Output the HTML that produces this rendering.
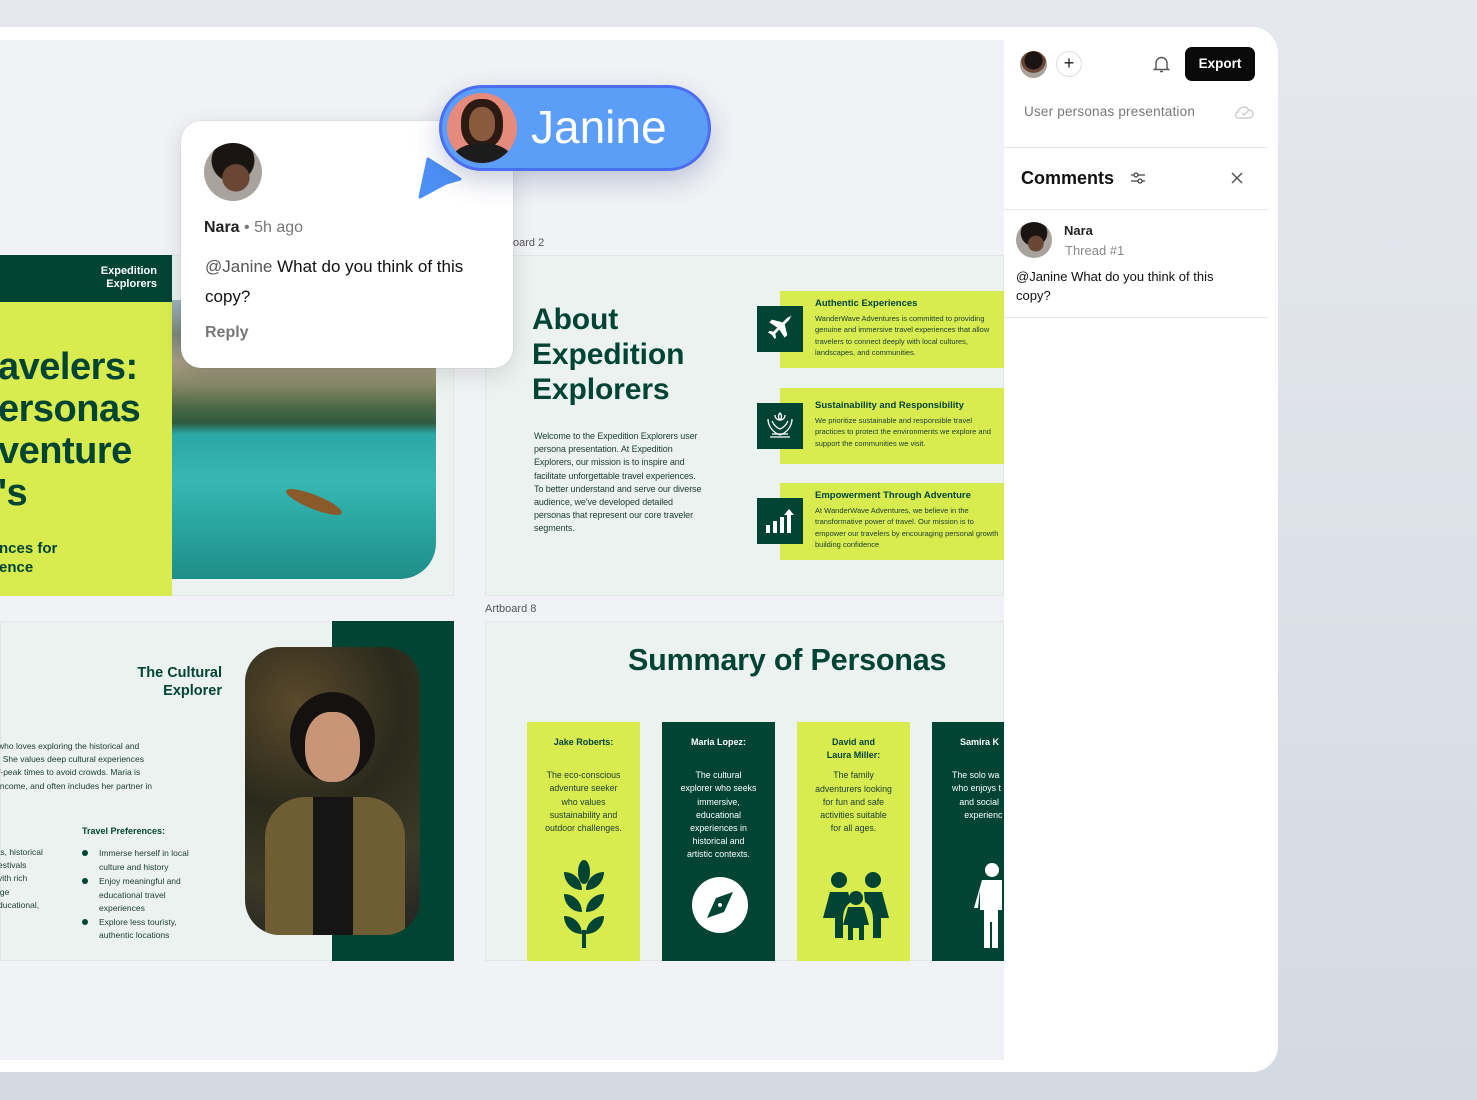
<!DOCTYPE html>
<html><head><meta charset="utf-8"><style>
*{margin:0;padding:0;box-sizing:border-box}
body{width:1477px;height:1100px;overflow:hidden;background:linear-gradient(#e5e8ee,#d4d9e2);font-family:"Liberation Sans",sans-serif;position:relative}
.a{position:absolute}
.g{color:#024433}
.lime{background:#d9ec4f}
.dg{background:#024433}
.b{font-weight:700}
</style></head><body>
<div class="a" style="left:-30px;top:27px;width:1308px;height:1045px;background:#fff;border-radius:0 26px 26px 0"></div>
<div class="a" style="left:0;top:40px;width:1004px;height:1020px;background:#f0f2f5;overflow:hidden">
 <!-- slide 1 -->
 <div class="a" style="left:0;top:215px;width:454px;height:341px;background:#ebf2f0;border:1px solid #e2e7e6"></div>
 <div class="a dg" style="left:0;top:215px;width:172px;height:47px"></div>
 <div class="a b" style="left:0;top:225px;width:157px;text-align:right;color:#fff;font-size:11px;line-height:13px">Expedition<br>Explorers</div>
 <div class="a lime" style="left:0;top:262px;width:172px;height:294px"></div>
 <div class="a b g" style="left:-2px;top:306px;font-size:38px;line-height:42px;letter-spacing:-0.5px;white-space:nowrap">avelers:<br>ersonas<br>venture<br>'s</div>
 <div class="a b g" style="left:-1px;top:499px;font-size:15px;line-height:19px">nces for<br>ence</div>
 <div class="a" style="left:172px;top:260px;width:264px;height:279px;border-radius:0 0 36px 0;overflow:hidden;background:linear-gradient(180deg,#9db4bd 0%,#7b8a7c 12%,#a79d86 22%,#8a8a6a 30%,#4e6a48 38%,#2f5a3e 44%,#2ba7a4 48%,#37b7b3 65%,#2aa6a0 80%,#1f8e8a 100%)">
  <div class="a" style="left:112px;top:195px;width:60px;height:14px;background:#8a5a2a;border-radius:50%;transform:rotate(22deg)"></div>
 </div>
 <!-- artboard 2 -->
 <div class="a" style="left:513px;top:197px;font-size:11px;color:#555">oard 2</div>
 <div class="a" style="left:485px;top:215px;width:519px;height:341px;background:#ebf2f0;border:1px solid #e2e7e6"></div>
 <div class="a b g" style="left:532px;top:262px;font-size:30px;line-height:35px;letter-spacing:-0.1px">About<br>Expedition<br>Explorers</div>
 <div class="a" style="left:534px;top:390px;width:172px;font-size:9px;line-height:13.2px;color:#1c3b30;letter-spacing:-0.1px">Welcome to the Expedition Explorers user persona presentation. At Expedition Explorers, our mission is to inspire and facilitate unforgettable travel experiences. To better understand and serve our diverse audience, we've developed detailed personas that represent our core traveler segments.</div>
 <div class="a lime" style="left:780px;top:251px;width:224px;height:77px"></div>
 <div class="a lime" style="left:780px;top:348px;width:224px;height:76px"></div>
 <div class="a lime" style="left:780px;top:443px;width:224px;height:77px"></div>
 <div class="a dg" style="left:757px;top:266px;width:46px;height:46px"></div>
 <div class="a dg" style="left:757px;top:363px;width:46px;height:46px"></div>
 <div class="a dg" style="left:757px;top:458px;width:46px;height:46px"></div>
 <svg class="a" style="left:764px;top:273px" width="32" height="32" viewBox="0 0 24 24"><path fill="#fff" d="M21 3c-1-1-3 0-4 1l-3 3-8-2-2 2 6 4-3 3-3-.5-1 1 3 2 2 3 1-1-.5-3 3-3 4 6 2-2-2-8 3-3c1-1 2-3 1-4z"/></svg>
 <svg class="a" style="left:763px;top:369px" width="34" height="34" viewBox="0 0 34 34" fill="none" stroke="#fff" stroke-width="1.3"><path d="M5 10c0 8 6 14 12 16 6-2 12-8 12-16"/><path d="M9 12c2 4 5 7 8 8 3-1 6-4 8-8"/><path d="M17 4c-2 2-2 5 0 7 2-2 2-5 0-7zM12 6c0 3 2 5 5 5M22 6c0 3-2 5-5 5"/><path d="M7 28h20M9 25h16"/></svg>
 <svg class="a" style="left:764px;top:465px" width="32" height="32" viewBox="0 0 32 32" fill="#fff"><rect x="2" y="20" width="4" height="8"/><rect x="9" y="16" width="4" height="12"/><rect x="16" y="12" width="4" height="16"/><path d="M23 28V10h-3l5-6 5 6h-3v18z"/></svg>
 <div class="a" style="left:815px;top:258px;width:189px;overflow:hidden;white-space:nowrap">
  <div class="b g" style="font-size:9.5px;margin-bottom:4px">Authentic Experiences</div>
  <div style="font-size:7.5px;line-height:11.3px;color:#1c3b30">WanderWave Adventures is committed to providing<br>genuine and immersive travel experiences that allow<br>travelers to connect deeply with local cultures,<br>landscapes, and communities.</div></div>
 <div class="a" style="left:815px;top:360px;width:189px;overflow:hidden;white-space:nowrap">
  <div class="b g" style="font-size:9.5px;margin-bottom:4px">Sustainability and Responsibility</div>
  <div style="font-size:7.5px;line-height:11.3px;color:#1c3b30">We prioritize sustainable and responsible travel<br>practices to protect the environments we explore and<br>support the communities we visit.</div></div>
 <div class="a" style="left:815px;top:450px;width:189px;overflow:hidden;white-space:nowrap">
  <div class="b g" style="font-size:9.5px;margin-bottom:4px">Empowerment Through Adventure</div>
  <div style="font-size:7.5px;line-height:11.3px;color:#1c3b30">At WanderWave Adventures, we believe in the<br>transformative power of travel. Our mission is to<br>empower our travelers by encouraging personal growth<br>building confidence</div></div>
 <!-- slide left bottom -->
 <div class="a" style="left:0;top:581px;width:454px;height:340px;background:#ebf2f0;border:1px solid #e2e7e6"></div>
 <div class="a dg" style="left:332px;top:581px;width:122px;height:340px"></div>
 <div class="a b g" style="left:100px;top:624px;width:122px;text-align:right;font-size:14.5px;line-height:18px">The Cultural<br>Explorer</div>
 <div class="a" style="left:-2px;top:700px;font-size:8.5px;line-height:13.2px;color:#1c3b30;white-space:nowrap">who loves exploring the historical and<br>. She values deep cultural experiences<br>f-peak times to avoid crowds. Maria is<br>income, and often includes her partner in</div>
 <div class="a" style="left:-2px;top:806px;font-size:8.5px;line-height:13.2px;color:#1c3b30;white-space:nowrap">ts, historical<br>estivals<br>vith rich<br>ige<br>ducational,</div>
 <div class="a b g" style="left:82px;top:786px;font-size:9px">Travel Preferences:</div>
 <div class="a" style="left:82px;top:807px;font-size:8.5px;line-height:13.5px;color:#1c3b30">
  <div style="position:relative;padding-left:17px">Immerse herself in local<br>culture and history<span class="a" style="left:0;top:3px;width:6px;height:6px;border-radius:50%;background:#024433"></span></div>
  <div style="position:relative;padding-left:17px;margin-top:1px">Enjoy meaningful and<br>educational travel<br>experiences<span class="a" style="left:0;top:3px;width:6px;height:6px;border-radius:50%;background:#024433"></span></div>
  <div style="position:relative;padding-left:17px">Explore less touristy,<br>authentic locations<span class="a" style="left:0;top:3px;width:6px;height:6px;border-radius:50%;background:#024433"></span></div>
 </div>
 <div class="a" style="left:245px;top:607px;width:175px;height:288px;border-radius:35px;overflow:hidden;background:radial-gradient(circle at 30% 20%,#5b4a2c,#2a2a1c 40%,#3a3a28 70%,#222 100%)">
  <div class="a" style="left:45px;top:45px;width:85px;height:90px;border-radius:50%;background:#141210"></div>
  <div class="a" style="left:60px;top:65px;width:55px;height:70px;border-radius:45%;background:#c89676"></div>
  <div class="a" style="left:20px;top:150px;width:140px;height:150px;border-radius:40px 40px 0 0;background:#6f5e34"></div>
  <div class="a" style="left:68px;top:150px;width:40px;height:140px;background:#151515"></div>
 </div>
 <!-- artboard 8 -->
 <div class="a" style="left:485px;top:563px;font-size:11px;color:#555">Artboard 8</div>
 <div class="a" style="left:485px;top:581px;width:519px;height:340px;background:#ebf2f0;border:1px solid #e2e7e6"></div>
 <div class="a b g" style="left:628px;top:603px;font-size:30.5px;letter-spacing:-0.2px;white-space:nowrap">Summary of Personas</div>
 <div class="a lime" style="left:527px;top:682px;width:113px;height:239px"></div>
 <div class="a dg" style="left:662px;top:682px;width:113px;height:239px"></div>
 <div class="a lime" style="left:797px;top:682px;width:113px;height:239px"></div>
 <div class="a dg" style="left:932px;top:682px;width:113px;height:239px"></div>
 <div class="a" style="left:527px;top:696px;width:113px;text-align:center;font-size:8.8px;line-height:13.2px;color:#1c3b30"><div class="b g" style="font-size:9px">Jake Roberts:</div><div style="margin-top:20px">The eco-conscious<br>adventure seeker<br>who values<br>sustainability and<br>outdoor challenges.</div></div>
 <div class="a" style="left:662px;top:696px;width:113px;text-align:center;font-size:8.8px;line-height:13.2px;color:#fff"><div class="b" style="font-size:9px">Maria Lopez:</div><div style="margin-top:20px">The cultural<br>explorer who seeks<br>immersive,<br>educational<br>experiences in<br>historical and<br>artistic contexts.</div></div>
 <div class="a" style="left:797px;top:696px;width:113px;text-align:center;font-size:8.8px;line-height:13.2px;color:#1c3b30"><div class="b g" style="font-size:9px">David and<br>Laura Miller:</div><div style="margin-top:7px">The family<br>adventurers looking<br>for fun and safe<br>activities suitable<br>for all ages.</div></div>
 <div class="a" style="left:932px;top:696px;width:72px;overflow:hidden;white-space:nowrap;font-size:8.8px;line-height:13.2px;color:#fff"><div class="b" style="font-size:9px;padding-left:28px">Samira K</div><div style="margin-top:20px;padding-left:20px">The solo wa<br>who enjoys t<br>&nbsp;&nbsp;&nbsp;and social<br>&nbsp;&nbsp;&nbsp;&nbsp;&nbsp;experienc</div></div>
 <svg class="a" style="left:560px;top:820px" width="48" height="88" viewBox="0 0 48 88" fill="#024433"><ellipse cx="24" cy="12" rx="6" ry="12"/><path d="M22 30C10 30 4 20 4 12c10 0 18 8 18 18zM26 30c12 0 18-10 18-18-10 0-18 8-18 18zM22 52C10 52 4 42 4 34c10 0 18 8 18 18zM26 52c12 0 18-10 18-18-10 0-18 8-18 18zM22 74C10 74 4 64 4 56c10 0 18 8 18 18zM26 74c12 0 18-10 18-18-10 0-18 8-18 18z"/><rect x="22" y="70" width="4" height="18"/></svg>
 <svg class="a" style="left:691px;top:836px" width="58" height="58" viewBox="0 0 58 58"><circle cx="29" cy="29" r="28" fill="#fff"/><path d="M42 16L33 36 16 42 25 22z" fill="#024433"/><circle cx="29" cy="29" r="2" fill="#fff"/></svg>
 <svg class="a" style="left:822px;top:830px" width="68" height="70" viewBox="0 0 68 70" fill="#024433"><circle cx="17" cy="10" r="8"/><circle cx="51" cy="10" r="8"/><circle cx="34" cy="28" r="7"/><path d="M8 22h18l3 10c-6 4-8 10-8 18v18h-8V48H1zM42 22h18l7 26h-8v20h-8V50c0-8-2-14-8-18z"/><path d="M26 37h16l5 18h-5v15h-5V58h-6v12h-5V55h-5z"/></svg>
 <svg class="a" style="left:974px;top:822px" width="28" height="86" viewBox="0 0 28 86" fill="#fff"><circle cx="18" cy="8" r="7"/><path d="M8 18h20v30h-4v38h-6V60h-2v26h-6V48H6V28L4 46H0z"/></svg>
</div>
<!-- comment card -->
<div class="a" style="left:181px;top:121px;width:332px;height:247px;background:#fff;border-radius:20px;box-shadow:0 6px 24px rgba(0,0,0,.12),0 0 0 1px rgba(0,0,0,.04)"></div>
<div class="a" style="left:204px;top:143px;width:58px;height:58px;border-radius:50%;background:radial-gradient(circle at 55% 60%,#6a4634 0 28%,transparent 30%),radial-gradient(circle at 50% 30%,#1a1512 0 42%,transparent 44%),#a8a39c;overflow:hidden"></div>
<div class="a" style="left:204px;top:219px;font-size:16px;color:#222"><b>Nara</b> <span style="color:#777">• 5h ago</span></div>
<div class="a" style="left:205px;top:252px;font-size:17px;line-height:30px;color:#111;width:262px"><span style="color:#555">@Janine</span> What do you think of this copy?</div>
<div class="a b" style="left:205px;top:324px;font-size:16px;color:#777">Reply</div>
<!-- cursor + pill -->
<svg class="a" style="left:416px;top:155px" width="46" height="46" viewBox="0 0 46 46"><path d="M12 4L44 24 30 28 4 42z" fill="#4d90f5" stroke="#4d90f5" stroke-width="3" stroke-linejoin="round"/></svg>
<div class="a" style="left:439px;top:85px;width:272px;height:86px;border-radius:43px;background:#5c9df8;border:3px solid #4b6ef0;box-shadow:0 10px 26px rgba(40,60,120,.25)"></div>
<div class="a" style="left:447px;top:93px;width:70px;height:70px;border-radius:50%;background:#e58a7d;overflow:hidden"><div class="a" style="left:14px;top:6px;width:42px;height:50px;border-radius:45%;background:#2a1a12"></div><div class="a" style="left:22px;top:14px;width:26px;height:34px;border-radius:45%;background:#8a5a3e"></div><div class="a" style="left:6px;top:50px;width:58px;height:30px;border-radius:50% 50% 0 0;background:#1c1c1c"></div></div>
<div class="a" style="left:531px;top:99px;font-size:46px;color:#fff;line-height:56px">Janine</div>
<!-- right panel -->
<div class="a" style="left:1020px;top:51px;width:27px;height:27px;border-radius:50%;background:radial-gradient(circle at 50% 35%,#1a1512 0 40%,#6a4634 42% 55%,#a8a39c 57%)"></div>
<div class="a" style="left:1056px;top:51px;width:26px;height:26px;border-radius:50%;border:1px solid #ddd;text-align:center;font-size:18px;line-height:23px;color:#222">+</div>
<svg class="a" style="left:1153px;top:55px" width="17" height="18" viewBox="0 0 17 18" fill="none" stroke="#555" stroke-width="1.4"><path d="M3 13V8a5.5 5.5 0 0111 0v5l1.5 1.5h-14zM7 16.5h3"/></svg>
<div class="a b" style="left:1185px;top:47px;width:70px;height:34px;background:#0a0a0a;border-radius:7px;color:#fff;font-size:13.5px;text-align:center;line-height:34px">Export</div>
<div class="a" style="left:1024px;top:104px;font-size:13.5px;color:#777;letter-spacing:0.2px">User personas presentation</div>
<svg class="a" style="left:1234px;top:103px" width="20" height="17" viewBox="0 0 20 17" fill="none" stroke="#ccc" stroke-width="1.4"><path d="M5 15h10a4 4 0 000-8 6 6 0 00-11 2A3 3 0 005 15z"/><path d="M8 10l2 2 5-5"/></svg>
<div class="a" style="left:1004px;top:147px;width:264px;height:1px;background:#e6e6e6"></div>
<div class="a b" style="left:1021px;top:168px;font-size:18px;color:#111">Comments</div>
<svg class="a" style="left:1130px;top:171px" width="16" height="14" viewBox="0 0 16 14" fill="none" stroke="#444" stroke-width="1.3"><path d="M1 4h14M1 10h14"/><circle cx="6" cy="4" r="2" fill="#fff"/><circle cx="10" cy="10" r="2" fill="#fff"/></svg>
<svg class="a" style="left:1231px;top:172px" width="12" height="12" viewBox="0 0 12 12" stroke="#555" stroke-width="1.5"><path d="M1 1l10 10M11 1L1 11"/></svg>
<div class="a" style="left:1004px;top:209px;width:264px;height:1px;background:#e6e6e6"></div>
<div class="a" style="left:1016px;top:222px;width:36px;height:36px;border-radius:50%;background:radial-gradient(circle at 55% 60%,#6a4634 0 26%,transparent 28%),radial-gradient(circle at 50% 30%,#1a1512 0 42%,transparent 44%),#a8a39c"></div>
<div class="a b" style="left:1064px;top:223px;font-size:13px;color:#222">Nara</div>
<div class="a" style="left:1065px;top:243px;font-size:13px;color:#888">Thread #1</div>
<div class="a" style="left:1016px;top:267px;font-size:13px;line-height:19px;color:#111;width:225px">@Janine What do you think of this copy?</div>
<div class="a" style="left:1004px;top:317px;width:264px;height:1px;background:#e6e6e6"></div>
</body></html>
